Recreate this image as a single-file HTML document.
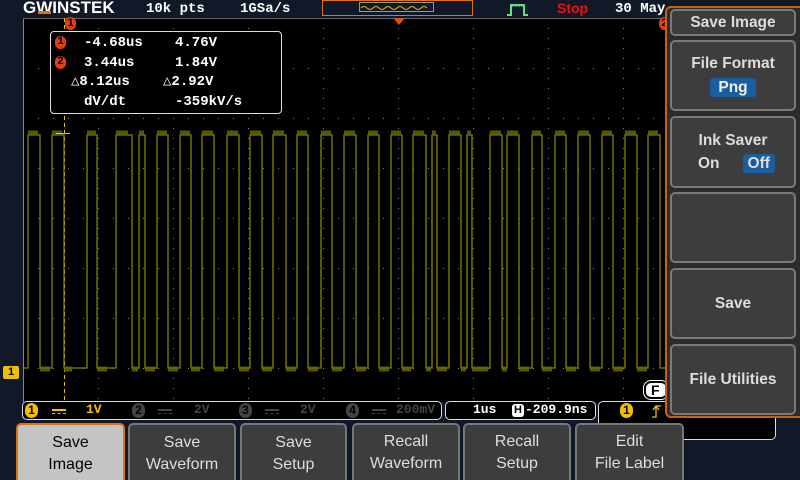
<!DOCTYPE html>
<html><head><meta charset="utf-8"><style>
*{margin:0;padding:0;box-sizing:border-box}
body{width:800px;height:480px;background:#111827;position:relative;overflow:hidden;font-family:"Liberation Sans",sans-serif;color:#fff}
.abs{position:absolute}
.mono{font-family:"Liberation Mono",monospace;font-weight:bold}
.mbtn{position:absolute;left:670px;width:126px;background:#3d3d3d;border:2px solid #7a7a7a;border-radius:5px;color:#ddd;font-weight:bold;font-size:15.5px;text-align:center}
.bbtn{position:absolute;top:423px;height:57px;background:#3d3d3d;border:2px solid #777;border-bottom:none;border-radius:5px 5px 0 0;color:#ddd;font-size:16px;text-align:center;line-height:22px;padding-top:7px}
.circ{display:inline-block;width:13px;height:15px;border-radius:7px;text-align:center;font-size:12px;line-height:15px;font-weight:bold}
</style></head><body>
<!-- top bar -->
<div class="abs" style="left:23px;top:-2px;font-weight:bold;font-size:17px">GWINSTEK</div>
<div class="abs" style="left:38px;top:11px;width:13px;height:3px;background:#e07010"></div>
<div class="abs mono" style="left:146px;top:1px;font-size:14px">10k pts</div>
<div class="abs mono" style="left:240px;top:1px;font-size:14px">1GSa/s</div>
<div class="abs" style="left:322px;top:0;width:151px;height:16px;border:1px solid #e07010"></div>
<div class="abs" style="left:359px;top:2px;width:75px;height:10px;border:1px solid #999"></div>
<svg class="abs" style="left:360px;top:3px" width="74" height="9"><path d="M1,5 q3,-3 6,0 t6,0 t6,0 t6,0 t6,0 t6,0 t6,0 t6,0 t6,0 t6,0 t6,0" stroke="#e0c000" fill="none"/></svg>
<svg class="abs" style="left:505px;top:2px" width="24" height="14"><path d="M2,13 H6 V3 H19 V13 H23" stroke="#5ee08a" stroke-width="2" fill="none"/><path d="M8,3v2M11,3v2M14,3v2M17,3v2" stroke="#5ee08a"/></svg>
<div class="abs" style="left:557px;top:0;color:#f01010;font-weight:bold;font-size:14px">Stop</div>
<div class="abs mono" style="left:615px;top:1px;font-size:14px">30 May</div>
<!-- grid -->
<svg class="abs" style="left:0;top:0" width="800" height="480">
<defs>
<pattern id="r" x="23" y="18" width="15" height="50" patternUnits="userSpaceOnUse"><rect width="1" height="1" fill="#888"/></pattern>
<pattern id="c" x="23" y="18" width="75" height="10" patternUnits="userSpaceOnUse"><rect width="1" height="1" fill="#888"/></pattern>
</defs>
<rect x="23" y="18" width="760" height="384" fill="#000"/>
<rect x="24" y="18" width="760" height="384" fill="url(#r)"/>
<rect x="23" y="19" width="760" height="384" fill="url(#c)"/>
<line x1="23.5" y1="18" x2="23.5" y2="402" stroke="#888"/>
<line x1="23" y1="18.5" x2="783" y2="18.5" stroke="#666"/>
<line x1="64.5" y1="18" x2="64.5" y2="402" stroke="#e8c000" stroke-dasharray="4,3"/>
<path d="M23,368 L28,368 L28,135 L40,135 L40,368 L52,368 L52,135 L64,135 L64,368 L87,368 L87,135 L97,135 L97,368 L116,368 L116,135 L132,135 L132,368 L139,368 L139,135 L145,135 L145,368 L157,368 L157,135 L168,135 L168,368 L180,368 L180,135 L191,135 L191,368 L202,368 L202,135 L214,135 L214,368 L227,368 L227,135 L239,135 L239,368 L250,368 L250,135 L262,135 L262,368 L273,368 L273,135 L286,135 L286,368 L297,368 L297,135 L308,135 L308,368 L321,368 L321,135 L332,135 L332,368 L344,368 L344,135 L356,135 L356,368 L368,368 L368,135 L379,135 L379,368 L391,368 L391,135 L402,135 L402,368 L413,368 L413,135 L426,135 L426,368 L432,368 L432,135 L437,135 L437,368 L449,368 L449,135 L461,135 L461,368 L467,368 L467,135 L472,135 L472,368 L490,368 L490,135 L502,135 L502,368 L507,368 L507,135 L519,135 L519,368 L532,368 L532,135 L542,135 L542,368 L555,368 L555,135 L566,135 L566,368 L578,368 L578,135 L590,135 L590,368 L602,368 L602,135 L613,135 L613,368 L625,368 L625,135 L637,135 L637,368 L648,368 L648,135 L660,135 L660,368 L666,368" stroke="#858500" stroke-width="1.3" fill="none"/>
<path d="M28,133h10M52,133h10M87,133h9M116,133h12M139,133h5M157,133h10M180,133h10M202,133h11M227,133h11M250,133h11M273,133h11M297,133h10M321,133h10M344,133h11M368,133h10M391,133h10M413,133h11M432,133h4M449,133h11M467,133h4M490,133h11M507,133h11M532,133h9M555,133h10M578,133h11M602,133h10M625,133h11M648,133h10M40,369h10M64,369h8M97,369h10M132,369h6M145,369h10M168,369h10M191,369h9M214,369h10M239,369h10M262,369h10M286,369h10M308,369h10M332,369h10M356,369h10M379,369h10M402,369h9M426,369h5M437,369h10M461,369h5M472,369h16M502,369h5M519,369h10M542,369h10M566,369h10M590,369h10M613,369h10M637,369h10" stroke="#6b6b00" stroke-width="5" fill="none" opacity="0.8"/>
<line x1="56" y1="133.5" x2="70" y2="133.5" stroke="#e8c000"/>
<path d="M393,18 L405,18 L399,25 Z" fill="#e05010"/>
</svg>
<div class="abs circ" style="left:65px;top:17px;background:#e04010;color:#000;font-size:11px;width:11px;height:13px;line-height:13px">1</div>
<div class="abs circ" style="left:659px;top:17px;background:#e04010;color:#000;font-size:11px;width:11px;height:13px;line-height:13px">2</div>
<!-- ch1 marker -->
<div class="abs" style="left:3px;top:366px;width:16px;height:13px;background:#f0c000;color:#000;font-weight:bold;font-size:11px;text-align:center;line-height:13px;border-radius:2px">1</div>
<!-- cursor box -->
<div class="abs mono" style="left:50px;top:31px;width:232px;height:83px;background:#000;border:1.5px solid #ddd;border-radius:4px;font-size:14px;line-height:19.5px;padding-top:2px">
<div style="position:relative;height:19.5px"><span class="abs circ" style="left:4px;top:2px;background:#e04010;color:#000;width:11px;height:13px;line-height:13px;font-size:11px">1</span><span class="abs" style="left:33px">-4.68us</span><span class="abs" style="left:124px">4.76V</span></div>
<div style="position:relative;height:19.5px"><span class="abs circ" style="left:4px;top:2px;background:#e04010;color:#000;width:11px;height:13px;line-height:13px;font-size:11px">2</span><span class="abs" style="left:33px">3.44us</span><span class="abs" style="left:124px">1.84V</span></div>
<div style="position:relative;height:19.5px"><span class="abs" style="left:20px">△8.12us</span><span class="abs" style="left:112px">△2.92V</span></div>
<div style="position:relative;height:19.5px"><span class="abs" style="left:33px">dV/dt</span><span class="abs" style="left:124px">-359kV/s</span></div>
</div>
<!-- F icon -->
<div class="abs" style="left:644px;top:381px;width:24px;height:18px;background:#fff;border-radius:7px;border:2px solid #000;outline:1px solid #fff;color:#000;font-weight:bold;font-size:14px;padding-left:5px;line-height:15px">F</div>
<!-- channel bar -->
<div class="abs" style="left:22px;top:401px;width:420px;height:19px;background:#000;border:1.5px solid #ddd;border-radius:5px"></div>
<div class="abs circ" style="left:25px;top:403px;background:#f0c000;color:#000">1</div>
<div class="abs" style="left:52px;top:409px;width:14px;height:5px;border-top:2px solid #f0c000;border-bottom:1px dashed #f0c000"></div>
<div class="abs mono" style="left:86px;top:402px;color:#f0c000;font-size:13px">1V</div>
<div class="abs circ" style="left:132px;top:403px;background:#444;color:#000">2</div>
<div class="abs" style="left:158px;top:409px;width:14px;height:5px;border-top:2px solid #444;border-bottom:1px dashed #444"></div>
<div class="abs mono" style="left:194px;top:402px;color:#444;font-size:13px">2V</div>
<div class="abs circ" style="left:239px;top:403px;background:#444;color:#000">3</div>
<div class="abs" style="left:265px;top:409px;width:14px;height:5px;border-top:2px solid #444;border-bottom:1px dashed #444"></div>
<div class="abs mono" style="left:300px;top:402px;color:#444;font-size:13px">2V</div>
<div class="abs circ" style="left:346px;top:403px;background:#444;color:#000">4</div>
<div class="abs" style="left:372px;top:409px;width:14px;height:5px;border-top:2px solid #444;border-bottom:1px dashed #444"></div>
<div class="abs mono" style="left:396px;top:402px;color:#444;font-size:13px">200mV</div>
<div class="abs" style="left:445px;top:401px;width:151px;height:19px;background:#000;border:1.5px solid #ddd;border-radius:5px"></div>
<div class="abs mono" style="left:473px;top:402px;font-size:13px">1us</div>
<div class="abs" style="left:512px;top:404px;width:12px;height:13px;background:#fff;border-radius:3px;color:#000;font-weight:bold;font-size:11px;text-align:center;line-height:13px">H</div>
<div class="abs mono" style="left:525px;top:402px;font-size:13px">-209.9ns</div>
<div class="abs" style="left:598px;top:401px;width:178px;height:39px;background:#000;border:1.5px solid #ddd;border-radius:5px"></div>
<div class="abs circ" style="left:620px;top:403px;background:#f0c000;color:#000">1</div>
<svg class="abs" style="left:651px;top:404px" width="12" height="14"><path d="M1,13 H5 V2 H10 M2,6 L5,2 L8,6" stroke="#f0c000" fill="none" stroke-width="1.3"/></svg>
<!-- right menu -->
<div class="abs" style="left:665px;top:6px;width:135px;height:412px;background:#2c2c2c;border:2px solid #c86010;border-right:none;border-radius:6px 0 0 6px"></div>
<div class="mbtn" style="top:9px;height:27px;line-height:24px">Save Image</div>
<div class="mbtn" style="top:40px;height:71px;padding-top:13px"><div>File Format</div><div style="display:inline-block;margin-top:5px;background:#1a5ea0;color:#eee;border-radius:3px;padding:0 8px;line-height:19px">Png</div></div>
<div class="mbtn" style="top:116px;height:72px;padding-top:14px"><div>Ink Saver</div><div style="margin-top:4px;text-align:left;padding-left:26px">On<span style="margin-left:23px;background:#1a5ea0;border-radius:3px;padding:0 5px;line-height:19px;display:inline-block">Off</span></div></div>
<div class="mbtn" style="top:192px;height:71px"></div>
<div class="mbtn" style="top:268px;height:71px;line-height:68px">Save</div>
<div class="mbtn" style="top:344px;height:71px;line-height:68px">File Utilities</div>
<!-- bottom buttons -->
<div class="bbtn" style="left:16px;width:109px;background:#c4c4c4;color:#000;border-color:#e07010">Save<br>Image</div>
<div class="bbtn" style="left:128px;width:108px">Save<br>Waveform</div>
<div class="bbtn" style="left:240px;width:107px">Save<br>Setup</div>
<div class="bbtn" style="left:352px;width:108px;padding-top:6px">Recall<br>Waveform</div>
<div class="bbtn" style="left:463px;width:108px;padding-top:6px">Recall<br>Setup</div>
<div class="bbtn" style="left:575px;width:109px;padding-top:6px">Edit<br>File Label</div>
</body></html>
